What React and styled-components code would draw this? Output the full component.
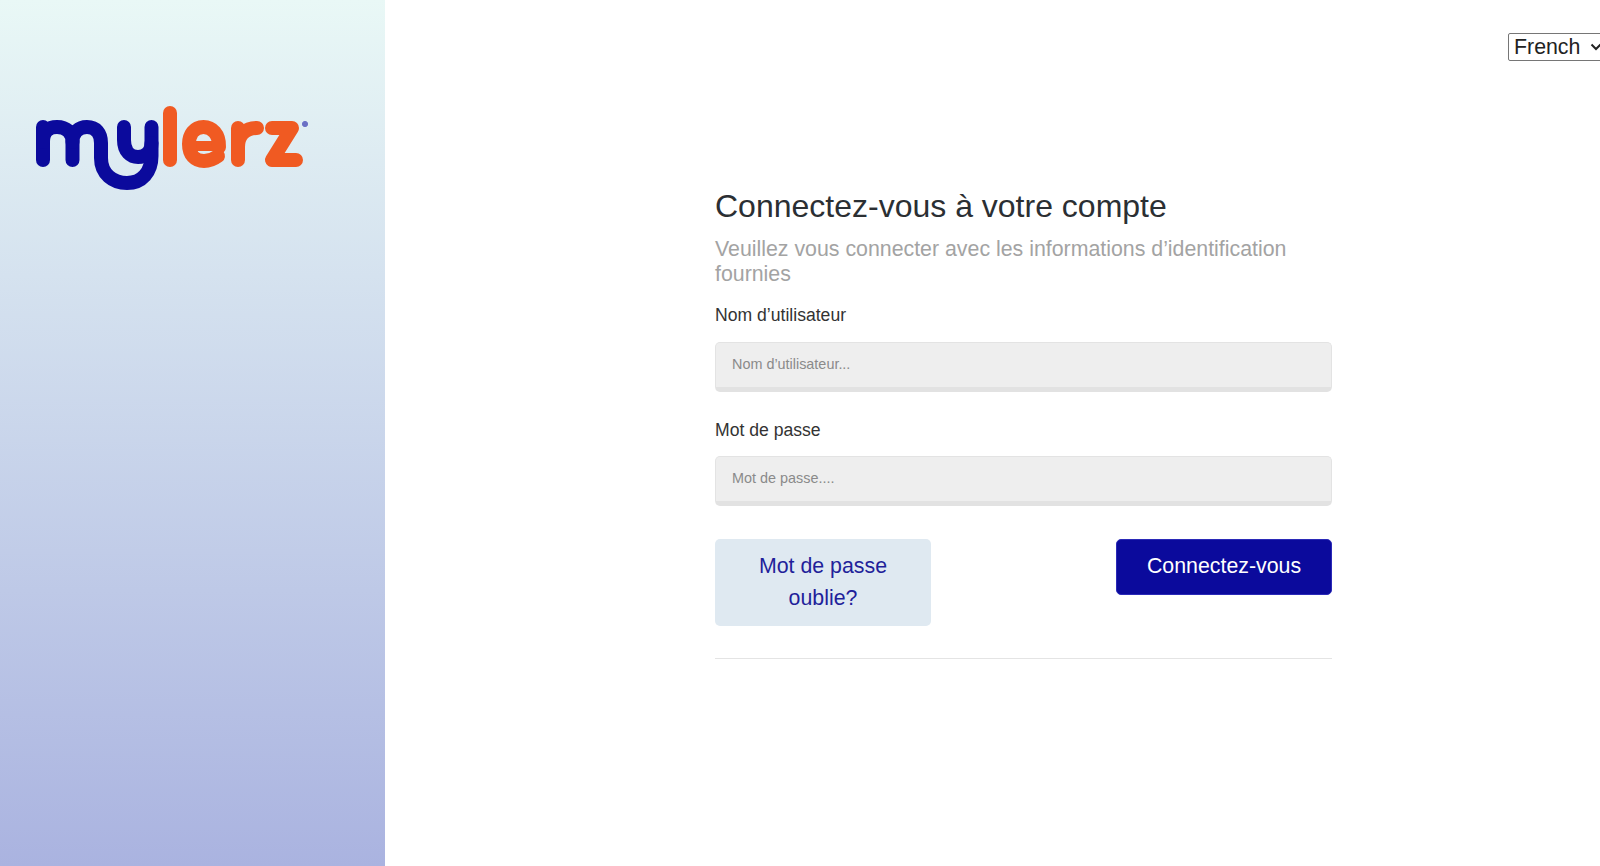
import React from "react";
import styled, { createGlobalStyle } from "styled-components";

const Global = createGlobalStyle`
  html, body { margin: 0; padding: 0; background: #fff; overflow: hidden; }
  body { font-family: "Liberation Sans", Arial, sans-serif; }
  * { box-sizing: border-box; }
`;
const Page = styled.div`
  display: flex;
  width: 1600px;
  height: 866px;
  overflow: hidden;
`;
const Side = styled.aside`
  width: 385px;
  flex: none;
  padding: 105px 0 0 35px;
  background: linear-gradient(180deg, #e9f8f6 0%, #aab3e0 100%);
`;
const Main = styled.main`
  flex: 1;
  position: relative;
  padding: 186px 0 0 330px;
`;
const chevron = encodeURIComponent(
  '<svg xmlns="http://www.w3.org/2000/svg" viewBox="0 0 12 8"><path d="M1.5 1.5 6 6l4.5-4.5" fill="none" stroke="#222" stroke-width="2"/></svg>'
);
const LangSelect = styled.select`
  position: absolute;
  top: 33px;
  left: 1123px;
  width: 100px;
  height: 28px;
  padding: 0 0 0 5px;
  appearance: none;
  font: 21.33px "Liberation Sans", Arial, sans-serif;
  color: #222;
  background: #fff url("data:image/svg+xml,${chevron}") no-repeat 81px 50% / 12px 8px;
  border: 1px solid #767676;
  border-radius: 2px;
`;
const Form = styled.form`
  width: 617px;
  display: flex;
  flex-direction: column;
`;
const Title = styled.h1`
  margin: 0;
  font-size: 32px;
  line-height: 40px;
  font-weight: 400;
  color: #2b2f33;
`;
const Subtitle = styled.p`
  margin: 11px 0 0;
  font-size: 21.33px;
  line-height: 25px;
  color: #a3a3a3;
`;
const Label = styled.label`
  display: block;
  margin-top: ${p => p.$gap}px;
  font-size: 17.6px;
  line-height: 20px;
  color: #333;
`;
const Input = styled.input`
  display: block;
  width: 100%;
  height: 50px;
  margin-top: ${p => p.$gap}px;
  padding: 0 16px 2px;
  font: 14.4px "Liberation Sans", Arial, sans-serif;
  background: #eeeeee;
  border: 1px solid #e3e3e3;
  border-bottom: 5px solid #e2e2e2;
  border-radius: 5px;
  &::placeholder { color: #8a8a8a; opacity: 1; }
`;
const Actions = styled.div`
  display: flex;
  justify-content: space-between;
  align-items: flex-start;
  margin-top: 33px;
`;
const Button = styled.button`
  width: 216px;
  font: 21.33px/32px "Liberation Sans", Arial, sans-serif;
  border-radius: 5px;
`;
const Forgot = styled(Button)`
  border: none;
  background: #dfe9f1;
  color: #221f9a;
  padding: 11px 30px 12px;
`;
const Submit = styled(Button)`
  background: #0b0a9c;
  color: #fff;
  border: 1px solid #2b2ab8;
  padding: 10px 20px 12px;
`;
const Divider = styled.hr`
  width: 100%;
  margin: 32px 0 0;
  border: none;
  border-top: 1px solid #e4e4e4;
`;
const LogoMark = styled.svg`
  display: block;
`;

function Logo() {
  return (
    <LogoMark width="276" height="88" viewBox="35 105 276 88" fill="none" role="img" aria-label="mylerz">
      <g stroke="#0b0a9c" strokeWidth="14" strokeLinecap="round" strokeLinejoin="round">
        <path d="M43 127 V160" />
        <path d="M43 142 C43 131 49 127 57 127 C66 127 72.5 132 72.5 142 V160" />
        <path d="M72.5 142 C72.5 132 79 127 87 127 C96 127 101 133 101 143 V158 C101 174 113 183 127 183 C142 183 151.5 172 151.5 156 V127" />
        <path d="M124 127 V140 C124 152 131 157 138 157 C145 157 151.5 152 151.5 143" />
      </g>
      <g stroke="#f05a22" strokeWidth="14" strokeLinecap="round" strokeLinejoin="round">
        <path d="M170 113 V160" />
        <path d="M190 146 H219" strokeWidth="10" strokeLinecap="butt" />
        <path d="M219 147 C219.5 134 212 127 203.5 127 C194 127 189 135 189 144 C189 155 195 161 204 161 C210 161 214 159 218 156" />
        <path d="M238 160 V128" />
        <path d="M238 147 C238 134 246 128 257 128" />
        <path d="M272 128 H292 L272 160 H296" />
      </g>
      <circle cx="305" cy="124" r="2.6" fill="#0b0a9c" fillOpacity=".55" stroke="#6a70c8" strokeWidth="1" />
    </LogoMark>
  );
}

export default function App() {
  return (
    <Page>
      <Global />
      <Side><Logo /></Side>
      <Main>
        <LangSelect defaultValue="fr"><option value="fr">French</option></LangSelect>
        <Form>
          <Title>Connectez-vous à votre compte</Title>
          <Subtitle>Veuillez vous connecter avec les informations d’identification fournies</Subtitle>
          <Label $gap={18}>Nom d’utilisateur</Label>
          <Input $gap={17} placeholder="Nom d’utilisateur..." />
          <Label $gap={28}>Mot de passe</Label>
          <Input $gap={16} placeholder="Mot de passe...." />
          <Actions>
            <Forgot type="button">Mot de passe oublie?</Forgot>
            <Submit type="button">Connectez-vous</Submit>
          </Actions>
          <Divider />
        </Form>
      </Main>
    </Page>
  );
}
